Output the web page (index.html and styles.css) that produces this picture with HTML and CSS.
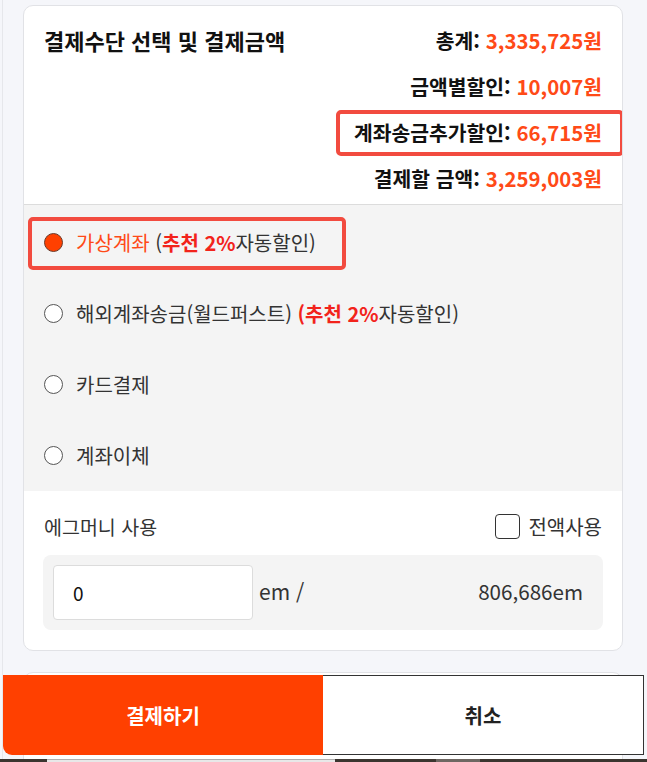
FILE: index.html
```html
<!DOCTYPE html>
<html lang="ko">
<head>
<meta charset="utf-8">
<title>결제수단 선택</title>
<link rel="stylesheet" href="styles.css">
</head>
<body>
<div class="page">
  <section class="card">
    <div class="summary">
      <h2 class="title">결제수단 선택 및 결제금액</h2>
      <ul class="totals">
        <li><span class="row">총계: <span class="val">3,335,725원</span></span></li>
        <li><span class="row">금액별할인: <span class="val">10,007원</span></span></li>
        <li><span class="row mark">계좌송금추가할인: <span class="val">66,715원</span></span></li>
        <li><span class="row">결제할 금액: <span class="val">3,259,003원</span></span></li>
      </ul>
    </div>
    <div class="methods">
      <div class="method">
        <span class="opt mark-opt"><span class="radio on"></span><span class="txt"><span class="sel">가상계좌</span> (<b class="rec">추천 2%</b>자동할인)</span></span>
      </div>
      <div class="method">
        <span class="opt"><span class="radio"></span><span class="txt">해외계좌송금(월드퍼스트) <b class="rec">(추천 2%</b>자동할인)</span></span>
      </div>
      <div class="method">
        <span class="opt"><span class="radio"></span><span class="txt">카드결제</span></span>
      </div>
      <div class="method">
        <span class="opt"><span class="radio"></span><span class="txt">계좌이체</span></span>
      </div>
    </div>
    <div class="egg">
      <div class="egg-head">
        <span class="egg-title">에그머니 사용</span>
        <span class="all"><span class="check"></span>전액사용</span>
      </div>
      <div class="egg-box">
        <div class="input">0</div>
        <span class="unit">em /</span>
        <span class="bal">806,686em</span>
      </div>
    </div>
  </section>
  <section class="card card-next"></section>
</div>
<div class="actions">
  <button class="btn pay">결제하기</button>
  <button class="btn cancel">취소</button>
</div>
<div class="taskbar">
  <span class="seg dark w47"></span>
  <span class="seg light w288"></span>
  <span class="seg dark w101"></span>
  <span class="seg mid w44"></span>
  <span class="seg dark grow"></span>
</div>
</body>
</html>
```

FILE: styles.css
```css
* { box-sizing: border-box; }
html, body { margin: 0; padding: 0; }
body {
  background: #f5f6fa;
  font-family: "Noto Sans CJK KR", "Noto Sans", sans-serif;
  color: #111;
  overflow: hidden;
}
.page {
  padding: 5px 24px 0 20px;
  border-left: 1px solid #e6e7eb;
  margin-left: 2px;
  min-height: 100vh;
}
.card {
  background: #fff;
  border: 1px solid #e1e2e6;
  border-radius: 10px;
  overflow: hidden;
}
.card-next {
  margin-top: 21px;
  height: 200px;
}
.summary {
  display: flex;
  justify-content: space-between;
  align-items: flex-start;
  padding: 11px 20px 3px 20px;
  border-bottom: 1px solid #dcdcdc;
}
.title {
  margin: 0;
  font-size: 22px;
  font-weight: 700;
  line-height: 46px;
  color: #111;
}
.totals {
  list-style: none;
  margin: 0;
  padding: 0;
  text-align: right;
}
.totals li {
  font-size: 20.4px;
  font-weight: 700;
  line-height: 46px;
  height: 46px;
}
.row {
  display: inline-block;
  position: relative;
}
.val { color: #ff4a17; }
.mark::after {
  content: "";
  position: absolute;
  top: 1px;
  bottom: -1px;
  left: -18px;
  right: -22px;
  border: 4px solid #f24b3f;
  border-radius: 5px;
}
.methods {
  background: #f4f4f4;
  padding-top: 2px;
}
.method {
  height: 71px;
  display: flex;
  align-items: center;
  padding-left: 20px;
}
.opt {
  position: relative;
  display: inline-flex;
  align-items: center;
  gap: 13px;
  line-height: 27px;
}
.mark-opt::after {
  content: "";
  position: absolute;
  top: -12px;
  bottom: -14px;
  left: -16px;
  right: -30px;
  border: 4px solid #f24b3f;
  border-radius: 5px;
}
.radio {
  width: 19px;
  height: 19px;
  border-radius: 50%;
  border: 1px solid #555;
  background: #fff;
  flex: none;
}
.radio.on {
  background: #ff4000;
  border-color: #6b3a2a;
}
.txt {
  font-size: 20px;
  color: #333;
}
.sel { color: #ff4a17; }
.rec {
  color: #f2231b;
  font-weight: 700;
}
.egg {
  padding: 22px 20px 20px 20px;
}
.egg-head {
  display: flex;
  justify-content: space-between;
  align-items: center;
  height: 26px;
}
.egg-title {
  font-size: 19.5px;
  color: #333;
}
.all {
  display: inline-flex;
  align-items: center;
  gap: 8px;
  font-size: 20px;
  color: #333;
}
.check {
  width: 25px;
  height: 25px;
  border: 1.5px solid #333;
  border-radius: 4px;
  background: #fff;
}
.egg-box {
  margin: 16px -1px 0 -1px;
  background: #f4f4f4;
  border-radius: 8px;
  padding: 10px 20px 10px 10px;
  display: flex;
  align-items: center;
}
.input {
  width: 200px;
  height: 55px;
  background: #fff;
  border: 1px solid #dcdcdc;
  border-radius: 4px;
  padding-left: 19px;
  display: flex;
  align-items: center;
  font-size: 19px;
  color: #111;
}
.unit {
  margin-left: 6px;
  font-size: 21px;
  color: #333;
  margin-top: -4px;
}
.bal {
  margin-left: auto;
  font-size: 20.6px;
  color: #333;
  margin-top: -4px;
}
.actions {
  position: fixed;
  left: 3px;
  right: 3px;
  bottom: 7px;
  height: 80px;
  display: flex;
}
.btn {
  flex: 1;
  font-family: inherit;
  font-size: 20px;
  font-weight: 700;
  border: none;
  margin: 0;
  padding: 0;
}
.pay {
  background: #ff4000;
  color: #fff;
  border-bottom-left-radius: 9px;
}
.cancel {
  background: #fff;
  color: #222;
  border: 1px solid #333;
  border-left: none;
}
.taskbar {
  position: fixed;
  left: 0;
  right: 0;
  bottom: 0;
  height: 3px;
  display: flex;
}
.seg { display: block; height: 3px; }
.dark { background: #3b352f; }
.light { background: #e8e8e8; border-top: 1px solid #b0b0b0; }
.mid { background: #6e6762; }
.w47 { width: 47px; }
.w288 { width: 288px; }
.w101 { width: 101px; }
.w44 { width: 44px; }
.grow { flex: 1; }
```
